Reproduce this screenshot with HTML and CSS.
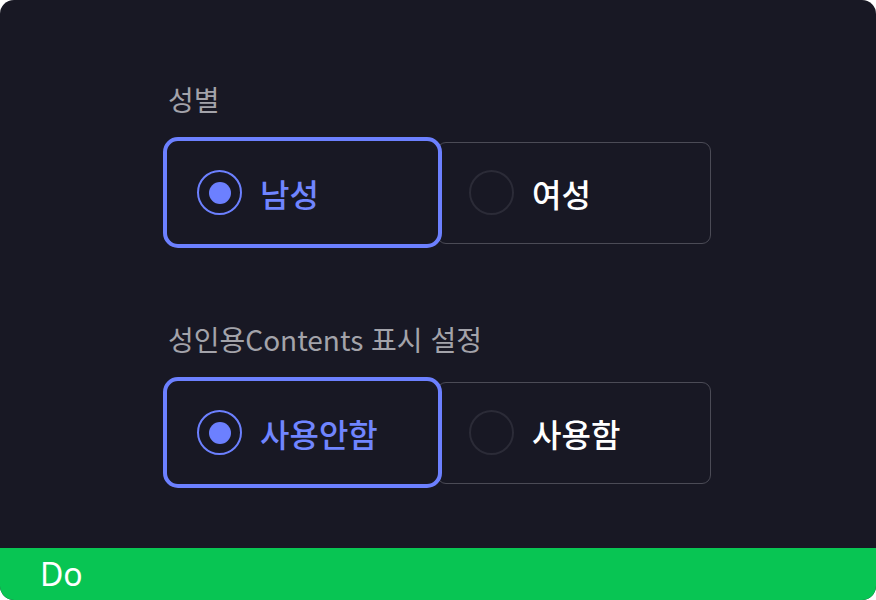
FILE: index.html
```html
<!DOCTYPE html>
<html lang="ko">
  <head>
    <meta charset="UTF-8" />
    <meta name="viewport" content="width=device-width, initial-scale=1.0" />
    <title>Radio Group - Do</title>
    <link rel="stylesheet" href="styles.css">
  </head>
  <body>
    <div class="frame">
      <div class="content">
        <div class="field">
          <div class="field-label">성별</div>
          <div class="options">
            <div class="option selected">
              <span class="radio"></span>
              <span class="option-text">남성</span>
            </div>
            <div class="option">
              <span class="radio"></span>
              <span class="option-text">여성</span>
            </div>
          </div>
        </div>

        <div class="field">
          <div class="field-label">성인용Contents 표시 설정</div>
          <div class="options">
            <div class="option selected">
              <span class="radio"></span>
              <span class="option-text">사용안함</span>
            </div>
            <div class="option">
              <span class="radio"></span>
              <span class="option-text">사용함</span>
            </div>
          </div>
        </div>
      </div>

      <div class="verdict">Do</div>
    </div>
  </body>
</html>
```

FILE: styles.css
```css
body {
  margin: 0;
  background: #ffffff;
  font-family: "Noto Sans CJK KR", "Noto Sans", sans-serif;
}
.frame {
  width: 876px;
  height: 600px;
  background: #181824;
  border-radius: 14px;
  overflow: hidden;
  display: flex;
  flex-direction: column;
}
.content {
  flex: 1;
  padding: 80px 0 0 163px;
  display: flex;
  flex-direction: column;
  gap: 72px;
}
.field-label {
  font-size: 28px;
  line-height: 38px;
  color: #a3a3aa;
  padding-left: 5px;
  margin-bottom: 19px;
}
.options {
  display: flex;
  align-items: center;
  height: 111px;
}
.option {
  box-sizing: border-box;
  display: flex;
  align-items: center;
  gap: 18px;
  width: 274px;
  height: 102px;
  padding-left: 31px;
  border: 1px solid #4b4b56;
  border-radius: 9px;
  background: #181824;
}
.option.selected {
  position: relative;
  z-index: 1;
  width: 279px;
  height: 111px;
  padding-left: 30px;
  border: 4px solid #6c80ff;
  border-radius: 15px;
  margin-right: -5px;
}
.radio {
  box-sizing: border-box;
  width: 45px;
  height: 45px;
  border-radius: 50%;
  border: 2px solid #2b2b37;
  display: flex;
  align-items: center;
  justify-content: center;
}
.selected .radio {
  border-color: #6c80ff;
}
.selected .radio::after {
  content: "";
  width: 22px;
  height: 22px;
  border-radius: 50%;
  background: #6c80ff;
}
.option-text {
  font-size: 32px;
  font-weight: 500;
  color: #ffffff;
}
.selected .option-text {
  color: #7085ff;
}
.verdict {
  height: 52px;
  background: #08c553;
  color: #ffffff;
  font-family: "Noto Sans", sans-serif;
  font-size: 32px;
  line-height: 52px;
  padding-left: 40px;
}
```
